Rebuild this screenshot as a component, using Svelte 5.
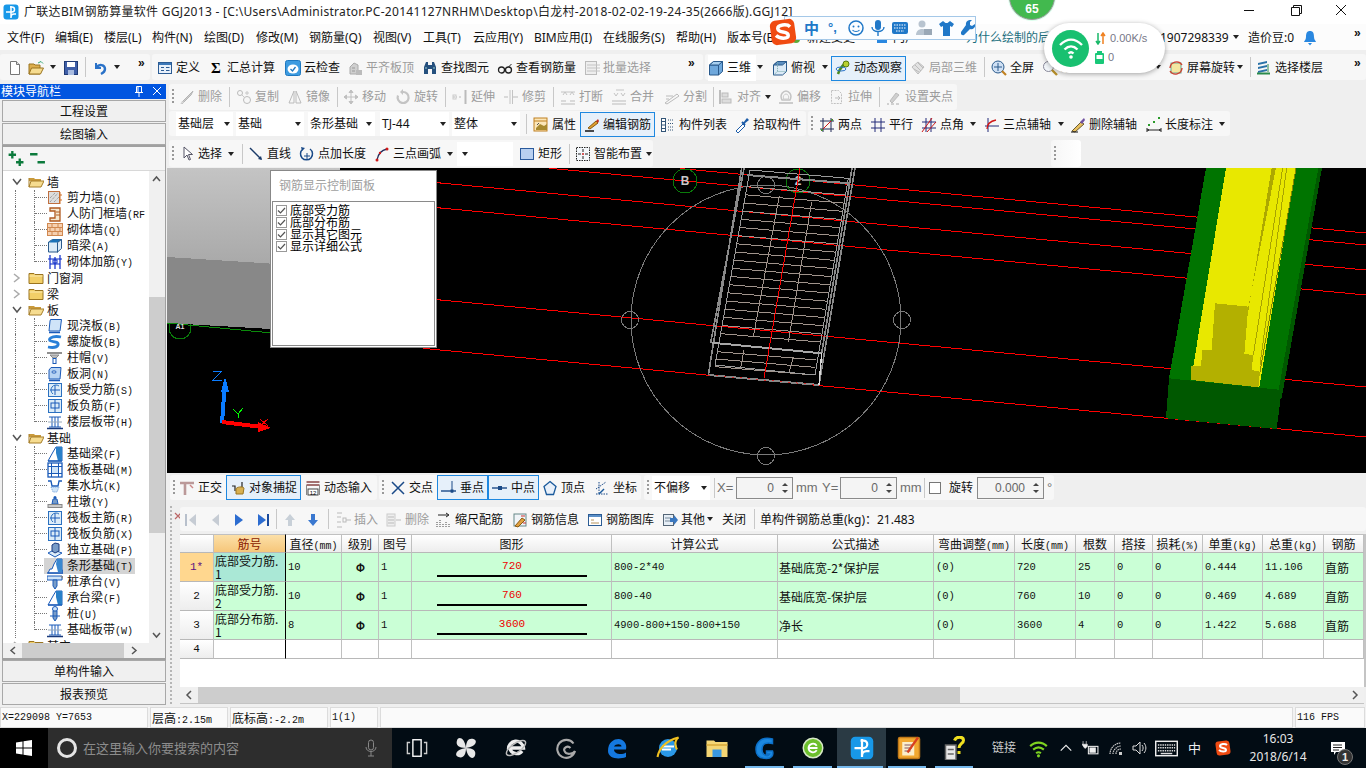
<script>
	// icon bodies, all on a 16x16 viewBox
	const I = {
		new: '<path d="M3.5 1.5h6l3 3v10h-9z" fill="#fff" stroke="#777"/><path d="M9.5 1.5v3h3" fill="#ddd" stroke="#777"/>',
		open: '<path d="M1 4h5l1 1h5v9H1z" fill="#dcae4e" stroke="#9a7420"/><path d="M3.5 8h12l-3 6H1z" fill="#f6dc90" stroke="#9a7420"/><path d="M10 3l3-1.5 2 2" fill="none" stroke="#3a7"/>',
		save: '<rect x="1.5" y="1.5" width="13" height="13" fill="#3f5fa8" stroke="#1f3a75"/><rect x="4" y="2" width="8" height="5" fill="#fff"/><rect x="5" y="10" width="6" height="5" fill="#a9bce0"/>',
		undo: '<path d="M4 3v5h5" fill="none" stroke="#2a72c8" stroke-width="2"/><path d="M4.5 7.5C7 3.5 13 4.5 13 9c0 2.5-2 4-4 5" fill="none" stroke="#2a72c8" stroke-width="2.4"/>',
		def: '<rect x="1.5" y="2.5" width="13" height="11" fill="#e8f0fa" stroke="#2c5c94"/><rect x="2" y="3" width="12" height="2" fill="#3c78b8"/><path d="M4 7.5h3M4 10.5h3M9 7.5h3.5M9 10.5h3.5" stroke="#2c5c94"/>',
		sum: '<text x="8" y="13" font-size="15" font-weight="700" text-anchor="middle" font-family="Liberation Serif">Σ</text>',
		cloud: '<rect x=".5" y=".5" width="15" height="15" rx="2" fill="#3d9be0" stroke="#1e78c0"/><ellipse cx="8" cy="9" rx="5.5" ry="4.5" fill="#fff"/><path d="M5.5 9l2 2 3-4" fill="none" stroke="#1e78c0" stroke-width="1.3"/>',
		level: '<path d="M3 14V7l4-4 4 2v9z" fill="#cfcfcf" stroke="#aaa"/><path d="M9 10h6v5H9z" fill="#bbb"/><path d="M5 8h3M5 11h3" stroke="#999"/>',
		binoc: '<path d="M2 14V7l2-5h2v12zM14 14V7l-2-5h-2v12z" fill="#25507e"/><rect x="6" y="5" width="4" height="4" fill="#25507e"/><path d="M3 8h2M11 8h2" stroke="#9cc"/>',
		glasses: '<circle cx="4.5" cy="10" r="3" fill="none" stroke="#222" stroke-width="1.3"/><circle cx="11.5" cy="10" r="3" fill="none" stroke="#222" stroke-width="1.3"/><path d="M7.5 10h1M11.5 7l3-3" stroke="#222"/>',
		batch: '<rect x="1.5" y="1.5" width="11" height="13" fill="#eee" stroke="#bbb"/><path d="M3 5h13M3 8h13M3 11h13" stroke="#c4c4c4"/>',
		cube: '<path d="M1.5 5l4-3.5h9v10l-4 3.5h-9z" fill="#6fa8dc" stroke="#2a5a8c"/><path d="M1.5 5h9v10M10.5 5l4-3.5" fill="none" stroke="#2a5a8c"/><path d="M1.5 5l4-3.5h9l-4 3.5z" fill="#a8d0f0" stroke="#2a5a8c"/>',
		topview: '<path d="M1.5 5l4-3.5h9v10l-4 3.5h-9z" fill="#dceaf6" stroke="#2a5a8c"/><path d="M5.5 1.5h9l-4 3.5h-9z" fill="#5c8fc0" stroke="#2a5a8c"/><path d="M1.5 15l4-3.5v-10M5.5 11.5h9" fill="none" stroke="#7aa" stroke-dasharray="1 1"/>',
		orbit: '<path d="M3 14C5 8 8 4 13 2" fill="none" stroke="#4a8a20" stroke-width="2.5"/><circle cx="11" cy="4" r="3" fill="#b8d030" stroke="#577a10"/><ellipse cx="6" cy="9" rx="5" ry="2" fill="none" stroke="#2a72c8"/>',
		local3d: '<path d="M2 7l6-5 6 5-6 7z" fill="#e2e2e2" stroke="#bbb"/><path d="M5 5l6 6M8 3l5 5M4 9l5 3" stroke="#bbb"/>',
		zoomfull: '<circle cx="7" cy="7" r="6" fill="#cfe0f4" stroke="#2a5a8c"/><path d="M7 3v8M3 7h8" stroke="#2a5a8c"/><path d="M11 11l4 4" stroke="#c08020" stroke-width="2.2"/>',
		zoom: '<circle cx="6.5" cy="6.5" r="5" fill="#f2f6fa" stroke="#889"/><path d="M10 10l5 5" stroke="#b8902a" stroke-width="2.4"/>',
		rot: '<rect x="3" y="3" width="10" height="10" fill="#f4e6a0" stroke="#6a9"/><path d="M2 8a6.5 6.5 0 0 1 12-3M14 8a6.5 6.5 0 0 1-12 3" fill="none" stroke="#d04030" stroke-width="1.4"/>',
		floors: '<path d="M2 3l9-2v2l-9 2zM2 7l9-2v2l-9 2zM2 11l9-2v2l-9 2z" fill="#2a72a8"/><path d="M1 13.5h13" stroke="#2a8a4a" stroke-width="2"/><path d="M12 4v8" stroke="#2a8a4a"/>',
		del: '<path d="M2 14l9-9 3-3-2 4-9 9z" fill="#ccc" stroke="#b4b4b4"/><path d="M1 15l4-1-2-2z" fill="#ddd"/>',
		copy: '<circle cx="4" cy="4" r="2.5" fill="none" stroke="#bbb"/><circle cx="11" cy="11" r="3.5" fill="none" stroke="#bbb"/><path d="M6 6l3 3M11 2v4M9 4h4" stroke="#c8c8c8"/>',
		mirror: '<path d="M7 2L2 14h5zM9 2l5 12H9z" fill="none" stroke="#bbb"/>',
		move: '<path d="M8 1v14M1 8h14M8 1l-2 2.5h4zM8 15l-2-2.5h4zM1 8l2.5-2v4zM15 8l-2.5-2v4z" stroke="#c0c0c0" fill="#c0c0c0"/>',
		rotate: '<path d="M8 3a5.5 5.5 0 1 1-5 3.5" fill="none" stroke="#c4c4c4" stroke-width="2.2"/><path d="M8 0v6l-3-3z" fill="#c4c4c4"/>',
		extend: '<path d="M1 8h4M7 8h3" stroke="#bbb" stroke-dasharray="2 1"/><path d="M13.5 1v14" stroke="#bbb" stroke-width="2"/><rect x="1" y="6" width="3" height="4" fill="none" stroke="#ccc"/>',
		trim: '<path d="M1 8h4M10 8h5" stroke="#bbb"/><path d="M7 1v14M9.5 1v14" stroke="#c4c4c4"/>',
		brk: '<path d="M1 12h5M10 12h5M1 15h14" stroke="#bbb"/><path d="M3 6l2-3 2 3M10 6l2-3 2 3M1 3h14" stroke="#c4c4c4" fill="none"/>',
		merge: '<path d="M1 12h14M1 15h14" stroke="#bbb"/><path d="M3 4l2 3 2-3M10 4l2 3 2-3M5 1h8" stroke="#c4c4c4" fill="none"/>',
		split: '<path d="M1 14l12-9 2 2-12 8zM2 7h7M2 10h3" fill="none" stroke="#bbb"/>',
		align: '<path d="M2 1v14" stroke="#aaa" stroke-width="1.5"/><rect x="4" y="4" width="6" height="4" fill="#ddd" stroke="#bbb"/><rect x="4" y="10" width="9" height="4" fill="#ddd" stroke="#bbb"/>',
		offset: '<path d="M4 11c-3-6 2-9 4-9s7 3 4 9z" fill="none" stroke="#c4c4c4" stroke-width="1.5"/><path d="M5.5 10c-1-3 1-5 2.5-5s3.500 2 2.5 5z" fill="none" stroke="#ccc"/><path d="M1 14h14" stroke="#ccc" stroke-width="2"/>',
		stretch: '<path d="M2.5 1.5h7l3 3v10h-10z" fill="#f6f6f6" stroke="#c0c0c0" stroke-dasharray="2 1"/><path d="M6 9h5M9 7l2 2-2 2" stroke="#bbb" fill="none"/>',
		handle: '<path d="M4 12l6-8 3 2-7 8z" fill="#d0d0d0" stroke="#bbb"/><path d="M1 15h2M5 15h3M10 15h3" stroke="#aaa"/>',
		prop: '<rect x="1" y="1" width="13" height="13" fill="#fbe6b8" stroke="#c08020"/><path d="M1 4h13" stroke="#c08020"/><path d="M3 11l4-4 4 2 3-2v6H3z" fill="#a88a30"/><path d="M4 8l2-2" stroke="#555"/>',
		edit: '<path d="M1 14h9" stroke="#111" stroke-width="1.5"/><path d="M4 11l8-7 2 2-8 6z" fill="#e0a030" stroke="#8a5a10"/><path d="M12 4l2-2 1 2-1 2z" fill="#c03020"/>',
		list: '<rect x="1.5" y="1.5" width="4" height="13" fill="#fff" stroke="#357"/><path d="M2 4.5h3M2 8h3M2 11.5h3" stroke="#357"/><path d="M8 3h6M8 6.5h6M8 10h6M8 13h6" stroke="#357" stroke-dasharray="1 1"/>',
		pick: '<path d="M2 14l7-7 2 2-7 7z" fill="#fff" stroke="#1c5ca8"/><path d="M9 6l4-5 2 2-5 4z" fill="#1c5ca8"/><path d="M8 5l3 3" stroke="#1c5ca8" stroke-width="2"/>',
		two: '<path d="M4 1v14M12 1v14" stroke="#222a58"/><path d="M1 4h14M1 12h14" stroke="#222a58"/><path d="M2 14L14 2" stroke="#d01818"/><circle cx="13" cy="3" r="1" fill="#2a9a2a"/><circle cx="3" cy="13" r="1" fill="#2a9a2a"/>',
		para: '<path d="M5 1v14M11 1v14M1 5h14M1 11h14" stroke="#222a78"/>',
		angle: '<path d="M5 1v14M10 1v14M1 5h14M1 11h14" stroke="#222a78"/><path d="M1 15L11 1M6 15L15 5" stroke="#d01818"/>',
		arc3: '<path d="M4 1v14M1 9h14" stroke="#222a78"/><path d="M3 12c0-5 4-8 9-9" fill="none" stroke="#d01818" stroke-width="1.3"/>',
		delaxis: '<path d="M2 14l9-9 3 2-9 8z" fill="#e8c060" stroke="#6a5a30"/><path d="M10 5l4-4 1 2-3 4z" fill="#7050a0"/><path d="M1 15h7" stroke="#111"/>',
		dim: '<path d="M1 11v4M15 11v4M1 13h14" stroke="#222"/><path d="M1 13l2-1v2zM15 13l-2-1v2z" fill="#222"/><rect x="2" y="7" width="2" height="2" fill="#2a9a2a"/><rect x="7" y="4" width="2" height="2" fill="#2a9a2a"/><rect x="12" y="0" width="2" height="2" fill="#2a9a2a"/>',
		sel: '<path d="M5 1v11l3-3 2 5 1.5-.5-2-5h4z" fill="#fff" stroke="#556"/>',
		line: '<path d="M2 2l11 11" stroke="#1a3a68" stroke-width="1.5"/><path d="M14 14l-4-1 3-3z" fill="#1a3a68"/>',
		ptlen: '<path d="M4 3a6 6 0 1 0 7 0" fill="none" stroke="#1a4a88" stroke-width="1.5"/><path d="M8 7v6M5 10h6" stroke="#1a4a88"/><path d="M2 1l4 1-3 3z" fill="#1a4a88"/>',
		arc: '<path d="M3 14C4 8 8 4 13 3" fill="none" stroke="#222a58" stroke-width="1.3"/><circle cx="3" cy="14" r="1.5" fill="#d01818"/><circle cx="13" cy="3" r="1.5" fill="#d01818"/><circle cx="6" cy="7" r="1.2" fill="#d01818"/>',
		rect: '<rect x="1.5" y="2.5" width="13" height="11" fill="#b8d0f0" stroke="#2a5a9c"/>',
		smart: '<rect x="1.5" y="1.5" width="13" height="13" fill="#f4f8fc" stroke="#222" stroke-dasharray="1.5 1"/><path d="M8 3v3M8 10v3M3 8h3M10 8h3" stroke="#222"/><circle cx="8" cy="8" r="1" fill="#c22"/>',
		ortho: '<path d="M1 3h14M6 3v12" stroke="#b99" stroke-width="2.6"/><path d="M11 5l3 3" stroke="#c88" stroke-width="1.4"/>',
		snap: '<path d="M2 6h3v5M12 2v7" stroke="#222" stroke-width="1.2" fill="none"/><path d="M6 9c0-2 7-3 8-1l-1 6H6z" fill="#d8b050" stroke="#9a7420"/>',
		dyn: '<path d="M1.5 2h13M1.5 5h13" stroke="#844" stroke-width="1.3"/><path d="M1.5 5v10M14.5 5v10" stroke="#888"/><rect x="3" y="9" width="10" height="6" fill="#fff" stroke="#444"/><text x="8" y="14.5" font-size="6" text-anchor="middle" font-family="Liberation Sans">12</text>',
		cross: '<path d="M2 2l12 12M14 2L2 14" stroke="#1a4a88" stroke-width="1.5"/>',
		perp: '<path d="M0 11h15" stroke="#1a4a88" stroke-width="1.4"/><path d="M11 1v12" stroke="#1a4a88"/><rect x="9.5" y="9.5" width="3" height="3" fill="#1a4a88"/>',
		mid: '<path d="M0 8h15" stroke="#1a4a88" stroke-width="1.4"/><rect x="6" y="6" width="4" height="4" fill="#1a4a88"/>',
		apex: '<path d="M8 1.5l6 5-2.5 8h-7L2 6.5z" fill="#e8f0fa" stroke="#1a5a9c" stroke-width="1.3"/>',
		coord: '<path d="M2 14h12M5 2v12M2 9l10-7" stroke="#1a4a88" stroke-dasharray="1.5 1"/><path d="M5 14l5-5" stroke="#1a5a9c" stroke-width="1.4"/>',
		first: '<path d="M3 2v12" stroke="#b8c0cc" stroke-width="2"/><path d="M13 2v12L6 8z" fill="#c6ccd4"/>',
		prev: '<path d="M12 2v12L5 8z" fill="#c6ccd4"/>',
		next: '<path d="M4 2v12l8-6z" fill="#2c6cd0"/>',
		last: '<path d="M2 2v12l8-6z" fill="#2c6cd0"/><path d="M12 2v12" stroke="#1a4a9c" stroke-width="2"/>',
		up: '<path d="M8 2l5 6h-3v6H6V8H3z" fill="#c8d0d8"/>',
		down: '<path d="M8 14l5-6h-3V2H6v6H3z" fill="#3a78d0"/>',
		ins: '<path d="M2 1h5M2 5h4M2 15h5M2 10h4" stroke="#bbb"/><rect x="8" y="6" width="3" height="4" fill="none" stroke="#bbb"/><path d="M11 8h5" stroke="#bbb"/>',
		rm: '<rect x="1" y="2" width="8" height="12" fill="#eee" stroke="#ccc"/><path d="M2 5h6M2 8h6M2 11h6M10 8h5" stroke="#bbb"/>',
		scale: '<path d="M1 15v-5M4 15V8M7 15v-4M10 15v-6M13 15v-3" stroke="#444" stroke-dasharray="1 1"/><path d="M2 3h10M10 1l3 2-3 2" stroke="#222" fill="none"/>',
		info: '<rect x="2" y="2" width="12" height="12" fill="#f0f4f8" stroke="#688"/><path d="M3 14l7-8 3 2-7 7z" fill="#e0a040" stroke="#8a5a10"/><path d="M9 4h4M11 11h3" stroke="#c33"/>',
		lib: '<rect x="1.5" y="2.5" width="13" height="11" fill="#fff" stroke="#2c5c94"/><rect x="2" y="3" width="12" height="2" fill="#5c90c8"/><path d="M4 8h3M4 11h8" stroke="#b8945c"/>',
		other: '<rect x="1.5" y="2.5" width="10" height="11" fill="#e6eef6" stroke="#567"/><path d="M3 6h6M3 9h6" stroke="#789"/><path d="M8 6h4V3l4 5-4 5v-3H8z" fill="#3a78c0"/>',
		bell: '<path d="M8 1c-3 0-4 2-4 6 0 3-2 4-2 5h12c0-1-2-2-2-5 0-4-1-6-4-6z" fill="#2a88e0"/><path d="M6 13h4l-2 2.5z" fill="#2a88e0"/>',
		doc: '<circle cx="8" cy="9" r="4" fill="#5cab3a"/><path d="M4 5l4-4 4 4z" fill="#e8c060"/>',
		portal: '<rect x="3" y="3" width="10" height="10" fill="#2a88e0"/>',
		// tree
		folderOpen: '<path d="M1 4h5l1 1h6v2H1z" fill="#c99a3c"/><path d="M1 13V4M3 7h13l-3 6H1z" fill="#f6dc90" stroke="#a67f2a"/>',
		folder: '<path d="M1 3.5h5l1 1h8v9H1z" fill="#f2cf68" stroke="#9a7420"/><path d="M1.5 6h13" stroke="#fbe9ae"/>',
		shear: '<rect x="1.5" y="1.5" width="11" height="12" fill="#ddd" stroke="#c07040"/><path d="M3 12l8-9M3 8l5-5M7 12l5-5" stroke="#888" stroke-dasharray="1 1"/><path d="M13 2v12M12 5h3M12 10h3" stroke="#d07028"/>',
		door: '<path d="M3 2h10v13H3v-3h5V5H3z" fill="#f5e8d0" stroke="#b05a20" stroke-width="1.3"/><path d="M9 6h4M9 9h4" stroke="#b05a20"/>',
		brick: '<rect x=".5" y="1.5" width="15" height="12" fill="#f6d0b0" stroke="#d08850"/><path d="M1 5.5h14M1 9.5h14M5 2v3M11 2v3M8 6v3M3 6v3M13 6v3M5 10v3M11 10v3" stroke="#d08850"/>',
		hidden: '<path d="M1.5 4l4-2.5h9v9l-4 3.5h-9z" fill="#dcecf8" stroke="#2a5a8c"/><path d="M5.5 1.5h9l-4 3h-9z" fill="#1a72b8"/><path d="M10.5 4.5v10M14.5 1.5l-4 3" stroke="#2a5a8c"/>',
		wallbar: '<path d="M1 5h14M3 1v14M13 1v14M3 10h10M8 3v12" stroke="#0a2ac8" stroke-width="1.2" fill="none"/><rect x="6" y="6" width="4" height="3" fill="none" stroke="#0a2ac8"/>',
		plate: '<path d="M3 3l.5-1.5h11L13 13H2z" fill="#cfe4f8" stroke="#1a5ab8"/><path d="M2 14.5h11" stroke="#1a5ab8" stroke-width="1.5"/>',
		spiral: '<path d="M14 3C4 1 0 6 4 7c4 1 8 1 7 4-1 2-5 3-10 2" fill="none" stroke="#2a80d8" stroke-width="2.8"/>',
		cap: '<path d="M0 2h15v2H0z" fill="#909090"/><path d="M3 5h9l-3 3H6z" fill="#c0c0c0" stroke="#888"/><rect x="6" y="8.5" width="3" height="5" fill="#fff" stroke="#1a5ab8"/>',
		hole: '<path d="M2 13V4l2-2.5h10L13 13z" fill="#b8d4f4" stroke="#1a5ab8"/><rect x="5" y="5" width="4" height="2" rx="1" fill="#fff" stroke="#1a5ab8"/><path d="M2 14.5h11" stroke="#1a5ab8" stroke-width="1.5"/>',
		rbar: '<rect x="1.5" y="1.5" width="13" height="13" fill="#dcecf8" stroke="#2a70c0"/><path d="M8 3v10M3 8h10" stroke="#1a5ab8"/><path d="M6 12a5 5 0 0 1 6-8" stroke="#2a70c0" fill="none"/>',
		nbar: '<rect x="1.5" y="1.5" width="13" height="13" fill="#dcecf8" stroke="#2a70c0"/><rect x="4" y="5" width="8" height="5" fill="none" stroke="#1a5ab8"/><path d="M8 2v12" stroke="#1a5ab8"/>',
		band: '<path d="M2 3h12M2 13h12M5 3v10M11 3v10M8 3v10" stroke="#1a5ab8"/><path d="M0 14.5h16" stroke="#1a3a7c" stroke-width="1.5"/><path d="M1 8h14" stroke="#9ab"/>',
		fbeam: '<path d="M1 15l5-9 3-5h6v14z" fill="#fff" stroke="#1a5ab8"/><path d="M9 1h6v14h-4l-2-8z" fill="#2a80c8"/><path d="M1 15h14" stroke="#1a5ab8" stroke-width="1.3"/>',
		raft: '<rect x="1" y="1" width="14" height="14" fill="#fff" stroke="#1a5ab8" stroke-width="1.3"/><rect x="4.5" y="4.5" width="7" height="7" fill="#cfe4f8" stroke="#1a5ab8"/><path d="M1 4.5h14M1 11.5h14M4.5 1v14M11.5 1v14" stroke="#1a5ab8"/>',
		pit: '<path d="M1 3h3l1 5h6l1-5h3" fill="none" stroke="#1a5ab8" stroke-width="1.3"/><path d="M4 9l2 5h4l2-5z" fill="#cfe4f8" stroke="#6a9ad8" stroke-dasharray="1 1"/>',
		pier: '<path d="M6 5h4l1 5H5z" fill="#789cc8" stroke="#1a5ab8"/><circle cx="8" cy="3.5" r="1.5" fill="#1a5ab8"/><rect x="1" y="10.5" width="14" height="3" fill="#ccc" stroke="#888"/>',
		iso: '<path d="M1 11l6-3 8 3-7 4z" fill="#dcecf8" stroke="#1a5ab8"/><path d="M5 9V3l3-2 4 1v7l-4 2z" fill="#789cc8" stroke="#1a3a7c"/>',
		strip: '<path d="M1 15l2-4h2l2-5 3-5h5v10l1 4z" fill="#fff" stroke="#1a5ab8"/><path d="M10 1h5v13h-4l-2-8z" fill="#3a88d0"/><path d="M0 15h16" stroke="#1a5ab8" stroke-width="1.3"/>',
		pilecap: '<path d="M0 2h15v4H0z" fill="#cfe4f8" stroke="#1a5ab8"/><path d="M6 6h4v6l-2 3-2-3z" fill="#789cc8" stroke="#1a5ab8"/><path d="M13 2h3v3z" fill="#888"/>',
		pile: '<circle cx="8" cy="3" r="2.5" fill="#cfe4f8" stroke="#1a5ab8"/><path d="M6 5h4v7l-2 3-2-3zM3 10h10" fill="#789cc8" stroke="#1a5ab8"/>',
		plus: '<path d="M5 1v7M1.5 4.5h7M12 8v7M8.5 11.5h7" stroke="#0c7a3c" stroke-width="2.2"/>',
		minus: '<path d="M1 4h7M8 11.5h7" stroke="#0c7a3c" stroke-width="2.2"/>',
		// taskbar
		taskview: '<rect x="5" y="2" width="6" height="12" fill="none" stroke="#fff"/><path d="M3 4H1v8h2M13 4h2v8h-2" fill="none" stroke="#ccc"/>',
		pin: '<path d="M8 8C3 8 1 6 2 3s5-2 6 5zM8 8c0-5 2-7 5-6s2 5-5 6zM8 8c5 0 7 2 6 5s-5 2-6-5zM8 8c0 5-2 7-5 6s-2-5 5-6z" fill="#e8e8e8"/>',
		ie: '<path d="M3 9a5 5 0 0 1 10-1H4c.5 4 6 5 8 2" fill="none" stroke="#eee" stroke-width="2.2"/><ellipse cx="8" cy="8" rx="7.5" ry="3" fill="none" stroke="#bbb" transform="rotate(-35 8 8)"/>',
		spin: '<path d="M13 5a6 6 0 1 0 1 5c-1 2-6 3-7 0-1-2 2-4 4-2" fill="none" stroke="#aaa" stroke-width="1.4"/>',
		edge: '<path d="M2 10C2 4 6 2 9 2s6 3 5 7H6c0 3 5 4 8 2v3c-5 2-12 1-12-4z" fill="#1478e0"/><path d="M6 7h5c0-2-4-2-5 0z" fill="#010b12"/>',
		ieblue: '<circle cx="8" cy="8" r="6" fill="#2a98e8"/><path d="M4 7h8M4 9h6" stroke="#fff" stroke-width="1.4"/><path d="M1 14c1-6 6-11 14-13-4 3-1 8-1 8" fill="none" stroke="#f0c020" stroke-width="1.4"/>',
		explorer: '<path d="M1 3h5l1 1h8v10H1z" fill="#f4d674"/><rect x="5" y="9" width="6" height="5" fill="#3a98e0"/><path d="M1 6h14" stroke="#d8a838"/>',
		gblue: '<path d="M13 2C6 0 2 4 2 9s4 6 7 6 5-2 4-5H9v2h2c-1 2-5 1-5-3s3-5 7-4z" fill="#1c88e0" stroke="#0c70c8"/>',
		ge: '<circle cx="8" cy="8" r="6.5" fill="#6cbf2c" stroke="#d8e8c8"/><path d="M5 8h6M5 8a3 3 0 0 1 5.5-1.5M5 8a3 3 0 0 0 5.5 1.5" fill="none" stroke="#fff" stroke-width="1.2"/>',
		gld: '<rect x=".5" y=".5" width="15" height="15" rx="3" fill="#1898e8"/><path d="M8 2v12M3 8h6a2.5 2.5 0 0 0 0-5H7M8 13a3 3 0 0 1 3-3h2" fill="none" stroke="#fff" stroke-width="1.5"/>',
		note: '<rect x="1" y="1" width="14" height="14" rx="1" fill="#f2a830" stroke="#c07818"/><rect x="3.5" y="4" width="8" height="9" fill="#fbeecb"/><path d="M5 6h5M5 8h5M5 10h4" stroke="#a88"/><path d="M7 11l7-10" stroke="#d84020" stroke-width="1.5"/>',
		help: '<rect x="1" y="6" width="7" height="10" fill="#e8e8e8" stroke="#666"/><path d="M2.5 9h4M2.5 12h4" stroke="#666"/><path d="M7 3c1-3 6-3 6 0 0 2-3 2-3 5M10 10v2" fill="none" stroke="#f0e020" stroke-width="2"/>',
		wifi: '<path d="M1 6c4-4 10-4 14 0M3.5 9c3-2.5 6-2.5 9 0M6 12c1.2-1 2.8-1 4 0" fill="none" stroke="#7ed321" stroke-width="1.8"/><circle cx="8" cy="14.2" r="1.3" fill="#7ed321"/>',
		caret: '<path d="M2 11l6-6 6 6" fill="none" stroke="#eee" stroke-width="1.3"/>',
		plug: '<rect x="6" y="6" width="9" height="7" fill="none" stroke="#eee"/><rect x="7" y="7" width="6" height="5" fill="#eee"/><path d="M1 1v3M4 1v3M0 4h5v2l-2 2-1-1z" fill="#eee" stroke="#eee" stroke-width=".6"/>',
		sig: '<path d="M2 14c0-6 5-11 11-11M5 14c0-4 4-8 8-8M8 14c0-3 2-5 5-5" fill="none" stroke="#ccc" stroke-dasharray="1.5 .6" stroke-width="1.2"/><path d="M11 12h3v3h-3z" fill="#ccc"/>',
		vol: '<path d="M2 6h3l4-4v12l-4-4H2z" fill="none" stroke="#ddd"/><path d="M11 5c1.5 2 1.5 4 0 6M13 3c2.5 3 2.5 7 0 10" fill="none" stroke="#ddd"/>',
		kbd: '<rect x=".5" y="3" width="15" height="10" fill="none" stroke="#eee"/><path d="M2 5.5h12M2 7.5h12M2 9.5h12" stroke="#ddd" stroke-dasharray="1 .6"/><path d="M4 11.5h8" stroke="#ddd"/>',
		msg: '<path d="M1 1h14v10H6l-2 3v-3H1z" fill="#fff"/><path d="M3 4h9M3 6.5h9M3 9h6" stroke="#222"/>',
		sogou: '<rect x="1" y="1" width="14" height="14" rx="3" fill="#f04b12" transform="rotate(-8 8 8)"/><path d="M12 5c-2-2-7-1-7 1 0 3 6 1 6 4 0 2-5 2-7 0" fill="none" stroke="#fff" stroke-width="2"/>'
	};

	const it = (x, ic, t, extra = {}) => ({ x, ic, t, ...extra });
	const arr = (x) => ({ x, arrow: true });
	const sep = (x) => ({ x, sep: true });
	const grip = (x) => ({ x, grip: true });
	const more = (x) => ({ x, more: true });
	const off = { off: true };

	// widths come from the x of the next item in the group
	function group(from, to, items, cls = '') {
		return { from, to, cls, items: items.map((a, i) => ({ ...a, w: (items[i + 1]?.x ?? to) - a.x })) };
	}

	const menuRow = [group(0, 1366, [
		it(7, null, '文件(F)'), it(55, null, '编辑(E)'), it(104, null, '楼层(L)'), it(152, null, '构件(N)'),
		it(204, null, '绘图(D)'), it(256, null, '修改(M)'), it(309, null, '钢筋量(Q)'), it(373, null, '视图(V)'),
		it(423, null, '工具(T)'), it(473, null, '云应用(Y)'), it(534, null, 'BIM应用(I)'), it(603, null, '在线服务(S)'),
		it(676, null, '帮助(H)'), it(727, null, '版本号(B)'), it(788, 'doc', '新建变更'), it(874, 'portal', '门户'),
		it(966, null, '为什么绘制的后', { teal: true }), it(1160, null, '1907298339'), arr(1230), it(1248, null, '造价豆:0'),
		it(1302, 'bell', ''), more(1354)
	], 'plain')];

	const row1 = [
		group(0, 150, [it(7, 'new', ''), it(28, 'open', ''), arr(47), it(63, 'save', ''), sep(82), it(92, 'undo', ''), arr(111), more(138)]),
		group(152, 703, [
			it(157, 'def', '定义'), it(208, 'sum', '汇总计算'), it(285, 'cloud', '云检查'), it(347, 'level', '平齐板顶', off),
			it(422, 'binoc', '查找图元'), it(497, 'glasses', '查看钢筋量'), it(584, 'batch', '批量选择', off), more(688)
		]),
		group(705, 1366, [
			it(708, 'cube', '三维', { white: true }), arr(754), it(772, 'topview', '俯视'), arr(819),
			it(831, 'orbit', '动态观察', { on: true, bw: 75 }), it(910, 'local3d', '局部三维', off), sep(981),
			it(991, 'zoomfull', '全屏'), it(1042, 'zoom', '缩放'), arr(1152), it(1168, 'rot', '屏幕旋转'), arr(1234),
			sep(1247), it(1256, 'floors', '选择楼层'), more(1354)
		])
	];

	const row2 = [group(169, 957, [
		grip(170), it(179, 'del', '删除', off), sep(226), it(236, 'copy', '复制', off), it(287, 'mirror', '镜像', off), sep(334),
		it(343, 'move', '移动', off), it(395, 'rotate', '旋转', off), sep(442), it(452, 'extend', '延伸', off), it(503, 'trim', '修剪', off),
		sep(550), it(560, 'brk', '打断', off), it(611, 'merge', '合并', off), it(664, 'split', '分割', off), sep(710),
		it(718, 'align', '对齐', off), arr(762), it(778, 'offset', '偏移', off), it(829, 'stretch', '拉伸', off), sep(876), it(886, 'handle', '设置夹点', off)
	])];

	const row3 = [
		group(169, 806, [
			{ x: 176, combo: '基础层', bw: 57 }, { x: 236, combo: '基础', bw: 68 }, { x: 308, combo: '条形基础', bw: 67 },
			{ x: 380, combo: 'TJ-44', bw: 69 }, { x: 452, combo: '整体', bw: 68 }, sep(523), it(533, 'prop', '属性'),
			it(580, 'edit', '编辑钢筋', { on: true, bw: 75 }), it(660, 'list', '构件列表'), it(734, 'pick', '拾取构件')
		]),
		group(808, 1230, [
			grip(809), it(819, 'two', '两点'), it(870, 'para', '平行'), it(921, 'angle', '点角'), arr(967), it(984, 'arc3', '三点辅轴'),
			arr(1055), it(1070, 'delaxis', '删除辅轴'), it(1146, 'dim', '长度标注'), arr(1216)
		])
	];

	const row4 = [
		group(169, 653, [
			grip(170), it(179, 'sel', '选择'), arr(225), sep(239), it(248, 'line', '直线'), it(299, 'ptlen', '点加长度'), it(374, 'arc', '三点画弧'),
			arr(444), { x: 457, combo: '', bw: 56 }, it(519, 'rect', '矩形'), sep(566), it(575, 'smart', '智能布置'), arr(643)
		]),
		group(1051, 1081, [grip(1052)], 'stub')
	];

	const snapRow = [
		group(170, 377, [grip(171), it(179, 'ortho', '正交'), it(226, 'snap', '对象捕捉', { on: true, bw: 75 }), it(305, 'dyn', '动态输入')]),
		group(379, 641, [
			grip(380), it(390, 'cross', '交点'), it(437, 'perp', '垂点', { on: true, bw: 51 }), it(488, 'mid', '中点', { on: true, bw: 51 }),
			it(542, 'apex', '顶点'), it(594, 'coord', '坐标')
		]),
		group(644, 1054, [
			grip(645), { x: 652, combo: '不偏移', bw: 58 }, sep(711), it(717, null, 'X=', { dim: true }), { x: 736, spin: '0', bw: 57 },
			it(796, null, 'mm', { dim: true }), it(822, null, 'Y=', { dim: true }), { x: 840, spin: '0', bw: 57 }, it(900, null, 'mm', { dim: true }),
			sep(921), { x: 929, check: true }, it(949, null, '旋转'), { x: 977, spin: '0.000', bw: 67 }, it(1047, null, '°', { dim: true })
		])
	];

	const editRow = [group(180, 1366, [
		it(183, 'first', ''), it(207, 'prev', ''), it(231, 'next', ''), it(256, 'last', ''), sep(273), it(282, 'up', ''), it(305, 'down', ''),
		sep(325), it(335, 'ins', '插入', off), it(386, 'rm', '删除', off), it(436, 'scale', '缩尺配筋'), it(512, 'info', '钢筋信息'),
		it(587, 'lib', '钢筋图库'), it(662, 'other', '其他'), arr(704), it(722, null, '关闭'), sep(751), it(760, null, '单构件钢筋总重(kg)：21.483')
	])];

	const tree = [
		{ n: '墙', open: true, kids: [['剪力墙', '(Q)', 'shear'], ['人防门框墙', '(RF', 'door'], ['砌体墙', '(Q)', 'brick'], ['暗梁', '(A)', 'hidden'], ['砌体加筋', '(Y)', 'wallbar']] },
		{ n: '门窗洞' },
		{ n: '梁' },
		{ n: '板', open: true, kids: [['现浇板', '(B)', 'plate'], ['螺旋板', '(B)', 'spiral'], ['柱帽', '(V)', 'cap'], ['板洞', '(N)', 'hole'], ['板受力筋', '(S)', 'rbar'], ['板负筋', '(F)', 'nbar'], ['楼层板带', '(H)', 'band']] },
		{ n: '基础', open: true, kids: [['基础梁', '(F)', 'fbeam'], ['筏板基础', '(M)', 'raft'], ['集水坑', '(K)', 'pit'], ['柱墩', '(Y)', 'pier'], ['筏板主筋', '(R)', 'rbar'], ['筏板负筋', '(X)', 'nbar'], ['独立基础', '(P)', 'iso'], ['条形基础', '(T)', 'strip'], ['桩承台', '(V)', 'pilecap'], ['承台梁', '(F)', 'fbeam'], ['桩', '(U)', 'pile'], ['基础板带', '(W)', 'band']] },
		{ n: '其它' }
	];

	const cols = [34, 72, 56, 37, 33, 200, 166, 156, 81, 61, 39, 38, 50, 60, 61, 40];
	const heads = ['', '筋号', '直径|(mm)', '级别', '图号', '图形', '计算公式', '公式描述', '弯曲调整|(mm)', '长度|(mm)', '根数', '搭接', '损耗|(%)', '单重|(kg)', '总重|(kg)', '钢筋'];
	const rows = [
		{ h: '1*', name: '底部受力筋.', sub: '1', d: '10', n: '720', f: '800-2*40', desc: '基础底宽-2*保护层', len: '720', cnt: '25', u: '0.444', t: '11.106' },
		{ h: '2', name: '底部受力筋.', sub: '2', d: '10', n: '760', f: '800-40', desc: '基础底宽-保护层', len: '760', cnt: '10', u: '0.469', t: '4.689' },
		{ h: '3', name: '底部分布筋.', sub: '1', d: '8', n: '3600', f: '4900-800+150-800+150', desc: '净长', len: '3600', cnt: '4', u: '1.422', t: '5.688' }
	];

	// viewport scene: long red axis lines, y given at x=1100
	const axes = [208, 220, 245, 270, 362, 412];
	const starts = [680, 549, 437, 437, 437, 423];
	const ribs = [];
	for (let y = 65; y <= 510; y += 24.5) {
		const x = 390 - (y - 15) * 0.1795;
		ribs.push([x, y, x + 297, y + 25]);
	}
	for (const y of [560, 582, 605]) {
		const x = 390 - (y - 15) * 0.1795;
		ribs.push([x, y, x + 297, y + 25]);
	}
	const taskApps = [
		['pin', 49], ['ie', 51], ['spin', 50], ['edge', 51], ['ieblue', 51], ['explorer', 48], ['gblue', 48], ['ge', 48], ['gld', 49, true], ['note', 46], ['help', 47]
	];
	const tray = [['wifi', 1028, 19], ['caret', 1058, 14], ['plug', 1081, 17], ['sig', 1107, 16], ['vol', 1130, 16], ['kbd', 1154, 23]];
	const lit = [[745, 39], [793, 39], [837, 46], [888, 38], [935, 38]];
</script>

{#snippet icon(name, size = 16)}
	<svg class="ico" width={size} height={size} viewBox="0 0 16 16">{@html I[name]}</svg>
{/snippet}

{#snippet toolRow(groups, left)}
	{#each groups as g, gi}
		<div class="grp {g.cls}" style="margin-left:{g.from - (gi ? groups[gi - 1].to : left)}px;width:{g.to - g.from}px;padding-left:{g.items[0].x - g.from}px">
			{#each g.items as a}
				<div class="cell" style="width:{a.w}px">
					{#if a.sep}
						<i class="sep"></i>
					{:else if a.grip}
						<i class="grip"></i>
					{:else if a.arrow}
						<i class="arrow"></i>
					{:else if a.more}
						<span class="more">»</span>
					{:else if a.combo !== undefined}
						<span class="combo" style="width:{a.bw}px">{a.combo}<i class="arrow"></i></span>
					{:else if a.spin}
						<span class="spin" style="width:{a.bw}px">{a.spin}<b class="updown"><i></i><i></i></b></span>
					{:else if a.check}
						<i class="box"></i>
					{:else}
						<span class="it" class:off={a.off} class:on={a.on} class:white={a.white} class:teal={a.teal} class:dim={a.dim} style={a.bw ? `width:${a.bw}px` : ''}>
							{#if a.ic}{@render icon(a.ic)}{/if}
							{#if a.t}<span>{a.t}</span>{/if}
						</span>
					{/if}
				</div>
			{/each}
		</div>
	{/each}
{/snippet}

<div class="app">
	<header class="title">
		<svg class="logo" width="16" height="16" viewBox="0 0 16 16">{@html I.gld}</svg>
		<span>广联达BIM钢筋算量软件 GGJ2013 - [C:\Users\Administrator.PC-20141127NRHM\Desktop\白龙村-2018-02-02-19-24-35(2666版).GGJ12]</span>
		<div class="winbtns">
			<svg width="46" height="20" viewBox="0 0 46 20"><path d="M18 10.5h10" stroke="#111" /></svg>
			<svg width="46" height="20" viewBox="0 0 46 20"><path d="M19.5 7.5h8v8h-8zM21.5 7.5v-2h8v8h-2" fill="none" stroke="#111" /></svg>
			<svg width="46" height="20" viewBox="0 0 46 20"><path d="M18 5l10 10M28 5L18 15" stroke="#111" /></svg>
		</div>
	</header>

	<div class="bar menu nudge">{@render toolRow(menuRow, 0)}</div>
	<div class="bar r1 nudge">{@render toolRow(row1, 0)}</div>

	<div class="main">
		<aside class="nav">
			<div class="navhead">
				<span>模块导航栏</span>
				<svg width="18" height="15" viewBox="0 0 18 15"><path d="M6.5 2.5h5v6h-5zM5 8.500h8M9 9v4M8 3v5" fill="none" stroke="#fff" /></svg>
				<svg width="18" height="15" viewBox="0 0 18 15"><path d="M5 3l8 8M13 3l-8 8" stroke="#fff" /></svg>
			</div>
			<button class="navbtn">工程设置</button>
			<button class="navbtn gap">绘图输入</button>
			<div class="frame">
				<div class="expand">{@render icon('plus', 17)}{@render icon('minus', 17)}</div>
				<div class="treewrap">
					<div class="list">
						{#each tree as t}
							<div class="node">
								{#if t.open}
									<svg class="chev" width="10" height="8" viewBox="0 0 10 8"><path d="M1 1l4 5 4-5" fill="none" stroke="#555" stroke-width="1.5" /></svg>
								{:else}
									<svg class="chev" width="10" height="10" viewBox="0 0 10 10"><path d="M2 1l5 4-5 4" fill="none" stroke="#aaa" stroke-width="1.5" /></svg>
								{/if}
								{@render icon(t.open ? 'folderOpen' : 'folder')}
								<span class="nm">{t.n}</span>
							</div>
							{#each t.kids ?? [] as k, i}
								<div class="kid">
									<i class="stem"></i>
									<i class="conn" class:last={i === t.kids.length - 1}></i>
									<span class="ent" class:sel={k[0] === '条形基础'}>
										{@render icon(k[2])}
										<span class="lbl">{k[0]}<span class="key">{k[1]}</span></span>
									</span>
								</div>
							{/each}
						{/each}
					</div>
					<div class="vscroll">
						<svg width="15" height="16" viewBox="0 0 15 16"><path d="M4 10l3.5-4 3.5 4" fill="none" stroke="#555" stroke-width="1.5" /></svg>
						<div class="vtrack"><div class="vthumb"></div></div>
						<svg width="15" height="16" viewBox="0 0 15 16"><path d="M4 6l3.5 4 3.5-4" fill="none" stroke="#555" stroke-width="1.5" /></svg>
					</div>
				</div>
				<div class="hscroll">
					<svg width="19" height="15" viewBox="0 0 19 15"><path d="M12 4L8 7.5 12 11" fill="none" stroke="#555" stroke-width="1.5" /></svg>
					<div class="hthumb"></div>
					<svg class="end" width="19" height="15" viewBox="0 0 19 15"><path d="M7 4l4 3.5L7 11" fill="none" stroke="#555" stroke-width="1.5" /></svg>
				</div>
			</div>
			<button class="navbtn">单构件输入</button>
			<button class="navbtn gap">报表预览</button>
		</aside>

		<section class="work">
			<div class="bar r2">{@render toolRow(row2, 167)}</div>
			<div class="bar r3 nudge">{@render toolRow(row3, 167)}</div>
			<div class="bar r4">{@render toolRow(row4, 167)}</div>

			<div class="view">
				<svg class="scene" width="1199" height="305" viewBox="167 168 1199 305" shape-rendering="crispEdges">
					<rect x="167" y="168" width="1199" height="305" fill="#000" />
					{#each axes as y, i}
						<line x1={starts[i]} y1={y - (1100 - starts[i]) * 0.094} x2="1366" y2={y + 266 * 0.094} stroke="#f00" />
					{/each}

					<!-- grid circle and small end markers -->
					<circle cx="766" cy="320" r="135" fill="none" stroke="#7a7a7a" />
					<circle cx="630" cy="320" r="8.5" fill="none" stroke="#7a7a7a" />
					<circle cx="902" cy="320" r="8.5" fill="none" stroke="#7a7a7a" />
					<circle cx="766" cy="456" r="8.5" fill="none" stroke="#7a7a7a" />
					<circle cx="766" cy="185" r="8.5" fill="none" stroke="#7a7a7a" />
					<circle cx="685" cy="181" r="12" fill="none" stroke="#0a7a0a" />
					<circle cx="798" cy="181" r="12" fill="none" stroke="#0a7a0a" />
					<text x="685" y="185" class="axis" fill="#c8c8c8">B</text>
					<text x="798" y="185" class="axis" fill="#c8c8c8">2</text>

					<!-- stair truss, drawn in the 3x zoom coordinates it was measured in -->
					<g transform="translate(620 165) scale(.33333)" fill="none">
						{#each ribs as r}
							<line x1={r[0]} y1={r[1]} x2={r[2]} y2={r[3]} stroke="#a0948c" stroke-width="3" />
						{/each}
						<path d="M478 92L400 515M575 110L505 530M372 555L362 610M520 575L508 620" stroke="#a0948c" stroke-width="3" />
						<path d="M390 15L285 600L585 630L685 40L390 15" stroke="#9a9a9a" stroke-width="3" />
						<path d="M365 10L265 630M372 10L272 533M705 10L597 660M696 10L605 565" stroke="#8a8a8a" stroke-width="5" />
						<path d="M380 30L690 55" stroke="#8a8a8a" stroke-width="6" />
						<path d="M275 533L605 565" stroke="#a8a8a8" stroke-width="6" />
						<path d="M265 630L597 660" stroke="#888" stroke-width="6" />
						<path d="M597 660L605 565" stroke="#d8d8d8" stroke-width="4" />
						<path d="M265 630L597 660" stroke="#f00" stroke-width="2" stroke-dasharray="6 18" />
						<path d="M540 10L432 640" stroke="#f00" stroke-width="3" />
					</g>

					<!-- strip footing on the right -->
					<g transform="translate(1100 165) scale(.33333)">
						<path d="M318 9H666L545 675L207 640Z" fill="#007400" />
						<path d="M655 9H666L545 700L536 675Z" fill="#005800" />
						<path d="M207 640L545 675L530 792L198 760Z" fill="#005800" />
						<path d="M378 9H588L478 665L273 645Z" fill="#e8e800" />
						<path d="M515 9H528L445 425L433 540L438 480Z" fill="#ada800" />
						<path d="M548 9L460 570M560 9L480 600" stroke="#a8a400" stroke-width="3" fill="none" />
						<path d="M588 9L480 620" stroke="#888800" stroke-width="3" fill="none" />
						<path d="M273 603H303L307 555H335L345 415L445 425L433 567L460 570L455 615L480 620L475 667L273 645Z" fill="#b3b000" />
					</g>

					<!-- grey wall behind the panel -->
					<circle cx="180" cy="328" r="11" fill="none" stroke="#0a7a0a" />
					<path d="M167 168H340V268L167 257Z" fill="url(#wallTop)" />
					<path d="M167 257L340 268V333L167 323Z" fill="#888" />
					<path d="M167 323L272 333" stroke="#0a8a0a" />
					<text x="180" y="329" class="tiny" fill="#ddd">A1</text>

					<!-- axis triad -->
					<path d="M222 423L225 382" stroke="#0a7cff" stroke-width="4" />
					<path d="M225 377L221 392H229Z" fill="#0a7cff" />
					<path d="M222 422L262 427" stroke="#f00" stroke-width="4" />
					<path d="M271 428L258 422V432Z" fill="#f00" />
					<path d="M213 371H222L213 380H222" fill="none" stroke="#0a7cff" />
					<path d="M233 409L238 414L243 408M238 414V418" fill="none" stroke="#0f0" />
					<path d="M260 419L268 426M268 419L260 426" stroke="#f00" />
					<defs>
						<linearGradient id="wallTop" x1="0" y1="0" x2="0" y2="1">
							<stop offset="0" stop-color="#c4c4c4" />
							<stop offset="1" stop-color="#a8a8a8" />
						</linearGradient>
					</defs>
				</svg>

				<div class="panel">
					<div class="ptitle">钢筋显示控制面板</div>
					<div class="pbody">
						{#each ['底部受力筋', '底部分布筋', '显示其它图元', '显示详细公式'] as c}
							<label class="pl"><i class="tick"><svg width="9" height="9" viewBox="0 0 9 9"><path d="M1 4.5l2.5 2.5L8 2" fill="none" stroke="#555" stroke-width="1.2" /></svg></i>{c}</label>
						{/each}
					</div>
				</div>
			</div>

			<div class="bar snap">{@render toolRow(snapRow, 167)}</div>

			<div class="lower">
				<div class="dots"><svg width="8" height="8" viewBox="0 0 8 8"><path d="M1 1l6 6M7 1L1 7" stroke="#b66" stroke-width="1.2" /></svg></div>
				<div class="editor">
					<div class="bar ed nudge">{@render toolRow(editRow, 180)}</div>
					<div class="tablewrap">
						<table>
							<colgroup>{#each cols as c}<col style="width:{c}px" />{/each}</colgroup>
							<thead>
								<tr>
									{#each heads as h, i}
										{@const parts = h.split('|')}
										<th class:hot={i === 1} class:lead={i === 1}>{parts[0]}{#if parts[1]}<span class="unit">{parts[1]}</span>{/if}</th>
									{/each}
								</tr>
							</thead>
							<tbody>
								{#each rows as r, ri}
									<tr>
										<th class="rh" class:cur={ri === 0}>{r.h}</th>
										<td class="name lead" class:act={ri === 0}>{r.name}<br />{r.sub}</td>
										<td class="m">{r.d}</td>
										<td class="c">Φ</td>
										<td class="m">1</td>
										<td class="shape"><span class="num">{r.n}</span><i></i></td>
										<td class="m">{r.f}</td>
										<td>{r.desc}</td>
										<td class="m">(0)</td>
										<td class="m">{r.len}</td>
										<td class="m">{r.cnt}</td>
										<td class="m">0</td>
										<td class="m">0</td>
										<td class="m">{r.u}</td>
										<td class="m">{r.t}</td>
										<td>直筋</td>
									</tr>
								{/each}
								<tr class="blank">
									<th class="rh">4</th>
									<td class="lead"></td>
									{#each cols.slice(2) as _}<td></td>{/each}
								</tr>
							</tbody>
						</table>
					</div>
					<div class="tscroll">
						<svg width="18" height="16" viewBox="0 0 18 16"><path d="M11 4L7 8l4 4" fill="none" stroke="#555" stroke-width="1.5" /></svg>
						<div class="tthumb"></div>
						<svg class="end" width="18" height="16" viewBox="0 0 18 16"><path d="M7 4l4 4-4 4" fill="none" stroke="#555" stroke-width="1.5" /></svg>
					</div>
				</div>
			</div>
		</section>
	</div>

	<footer class="status">
		<span class="s1">X=229098 Y=7653</span>
		<span class="s2"><em>层高</em>:2.15m</span>
		<span class="s3"><em>底标高</em>:-2.2m</span>
		<span class="s4">1(1)</span>
		<span class="s5"></span>
		<span class="s6">116 FPS</span>
	</footer>

	<div class="taskbar">
		<div class="start">
			<svg width="16" height="16" viewBox="0 0 16 16"><path d="M0 2.5l6.5-1v6H0zM7.5 1.3L16 0v7.5H7.5zM0 8.5h6.5v6l-6.5-1zM7.5 8.5H16V16l-8.5-1.3z" fill="#fff" /></svg>
		</div>
		<div class="search">
			<i class="cortana"></i>
			<span>在这里输入你要搜索的内容</span>
			<svg width="12" height="18" viewBox="0 0 12 18"><rect x="3.5" y="1" width="5" height="10" rx="2.5" fill="none" stroke="#888" /><path d="M1 8c0 6 10 6 10 0M6 13v4M3 17h6" fill="none" stroke="#888" /></svg>
		</div>
		<div class="slot tv">{@render icon('taskview', 22)}</div>
		{#each taskApps as a}
			<div class="slot" class:cur={a[2]} style="width:{a[1]}px">{@render icon(a[0], 24)}</div>
		{/each}
		<div class="trayarea">
			<span class="link">链接</span>
			{#each tray as t, i}
				<span class="trayic" style="margin-left:{i ? t[1] - tray[i - 1][1] - tray[i - 1][2] : 13}px">{@render icon(t[0], t[2])}</span>
			{/each}
			<span class="ime">中</span>
			<span class="trayic sg">{@render icon('sogou', 16)}</span>
			<div class="clock"><span>16:03</span><span>2018/6/14</span></div>
			<div class="msg">{@render icon('msg', 16)}<b>1</b></div>
		</div>
		{#each lit as l}
			<i class="lit" style="left:{l[0]}px;width:{l[1]}px"></i>
		{/each}
	</div>

	<!-- floating desktop widgets, sitting over the window -->
	<div class="ball"><b>65</b></div>
	<div class="sogou">
		<svg class="slogo" width="28" height="28" viewBox="0 0 16 16">{@html I.sogou}</svg>
		<b class="zh">中</b>
		<span class="dots2">°,</span>
		<svg width="16" height="16" viewBox="0 0 16 16"><circle cx="8" cy="8" r="7" fill="none" stroke="#2078c8" stroke-width="1.5" /><circle cx="5.5" cy="6.5" r="1" fill="#2078c8" /><circle cx="10.5" cy="6.5" r="1" fill="#2078c8" /><path d="M4.5 10c1.5 2 5.5 2 7 0" fill="none" stroke="#2078c8" stroke-width="1.2" /></svg>
		<svg width="14" height="16" viewBox="0 0 14 16"><rect x="4" y="0" width="6" height="10" rx="3" fill="#2078c8" /><path d="M1 7c0 6 12 6 12 0M7 12v4" fill="none" stroke="#2078c8" stroke-width="1.4" /></svg>
		<svg width="16" height="14" viewBox="0 0 16 14"><rect x="0" y="1" width="16" height="12" rx="2" fill="#2078c8" /><path d="M2 4h12M2 7h12M4 10h8" stroke="#fff" stroke-dasharray="1.5 1" /></svg>
		<svg width="17" height="16" viewBox="0 0 17 16"><circle cx="7" cy="4" r="3.5" fill="#b8c4d0" /><path d="M1 15c0-8 12-8 12 0z" fill="#b8c4d0" /><rect x="9" y="9" width="8" height="6" fill="#9aa8b6" /></svg>
		<svg width="15" height="15" viewBox="0 0 15 15"><path d="M4 0L0 3l2 3 2-1v10h7V5l2 1 2-3-4-3-2.5 2h-2z" fill="#2078c8" /></svg>
		<svg width="14" height="16" viewBox="0 0 14 16"><path d="M9 0a4 4 0 0 0-4 5L0 12c-1 2 1 4 3 3l6-6a4 4 0 0 0 5-5l-3 2-2-1V2l2-2z" fill="#2078c8" /></svg>
	</div>
	<div class="netw">
		<div class="wbadge">
			<svg width="26" height="22" viewBox="0 0 26 22"><path d="M2 8c7-7 15-7 22 0M6.5 12.5c4-4 9-4 13 0M10.5 16.5c1.5-1.500 3.5-1.500 5 0" fill="none" stroke="#fff" stroke-width="2.4" /><circle cx="13" cy="20" r="1.8" fill="#fff" /></svg>
		</div>
		<div class="stats">
			<div><svg width="11" height="13" viewBox="0 0 11 13"><path d="M3 1v11M1 9l2 3 2-3" fill="none" stroke="#18b868" stroke-width="1.5" /><path d="M8 12V1M6 4l2-3 2 3" fill="none" stroke="#f08020" stroke-width="1.5" /></svg><span>0.00K/s</span></div>
			<div><svg width="9" height="13" viewBox="0 0 9 13"><rect x="0" y="2" width="9" height="11" rx="1" fill="#18c878" /><rect x="2" y="0" width="5" height="2" fill="#18c878" /><rect x="1.5" y="4" width="6" height="4" fill="#fff" /></svg><span>0</span></div>
		</div>
	</div>
</div>

<style>
	:global(body) {
		margin: 0;
		overflow: hidden;
		background: #f0f0f0;
	}

	.app {
		position: relative;
		width: 1366px;
		height: 768px;
		overflow: hidden;
		background: #efefef;
		font: 12px/16px 'Noto Sans', 'Noto Sans CJK SC', sans-serif;
		color: #111;
		display: flex;
		flex-direction: column;
	}

	.ico {
		flex: none;
		display: block;
	}

	.title {
		height: 24px;
		flex: none;
		display: flex;
		align-items: center;
		background: #fff;
		padding-left: 3px;
		white-space: nowrap;
		font-size: 12px;
		letter-spacing: 0.3px;
		color: #222;
	}

	.logo {
		margin-right: 5px;
	}

	.winbtns {
		position: absolute;
		top: 0;
		right: 2px;
		display: flex;
		height: 20px;
	}

	.bar {
		display: flex;
		flex: none;
	}

	.nudge .it {
		margin-top: 2px;
	}

	.menu {
		height: 26px;
		background: #fcfcfc;
	}

	.r1 {
		height: 26px;
		margin: 4px 0;
	}

	.r2 {
		height: 26px;
	}

	.r3 {
		height: 25px;
		margin-top: 1px;
	}

	.r4 {
		height: 27px;
		margin: 4px 0 1px;
	}

	.grp {
		flex: none;
		box-sizing: border-box;
		display: flex;
		align-items: center;
		background: #f7f7f7;
		border-radius: 3px;
		height: 100%;
	}

	.menu .grp {
		background: none;
	}

	.grp.stub {
		background: linear-gradient(90deg, #f6f6f6, #fff);
	}

	.cell {
		flex: none;
		height: 100%;
		display: flex;
		align-items: center;
	}

	.it {
		display: flex;
		align-items: center;
		gap: 3px;
		white-space: nowrap;
		box-sizing: border-box;
	}

	.it.off {
		color: #9c9c9c;
	}

	.it.dim {
		color: #6f6f6f;
		font-family: 'Liberation Sans', 'Noto Sans CJK SC', sans-serif;
		font-size: 13px;
	}

	.it.teal {
		color: #1a6e7c;
	}

	.it.white {
		background: #fff;
		height: 26px;
		padding-right: 5px;
		margin-right: -5px;
	}

	.it.on {
		height: 25px;
		padding-left: 3px;
		background: #e6f0fa;
		border: 1px solid #1e88e0;
	}

	.sep {
		display: block;
		width: 1px;
		height: 20px;
		margin-left: 3px;
		background: #c8c8c8;
	}

	.grip {
		display: block;
		width: 2px;
		height: 16px;
		margin-left: 2px;
		background: repeating-linear-gradient(180deg, #999 0 2px, transparent 2px 4px);
	}

	.arrow {
		display: block;
		flex: none;
		width: 0;
		height: 0;
		margin-left: 3px;
		border: 3px solid transparent;
		border-top: 4px solid #222;
		border-bottom: 0;
	}

	.more {
		font: 700 12px/14px 'Liberation Sans', sans-serif;
		margin-top: -8px;
	}

	.combo {
		display: flex;
		align-items: center;
		justify-content: space-between;
		box-sizing: border-box;
		height: 24px;
		padding: 0 3px 0 2px;
		background: #fff;
		white-space: nowrap;
	}

	.spin {
		display: flex;
		align-items: center;
		justify-content: flex-end;
		box-sizing: border-box;
		height: 22px;
		padding-right: 2px;
		border: 1px solid #8a8a8a;
		background: #f4f4f4;
		color: #666;
		font: 12px 'Liberation Sans', sans-serif;
	}

	.updown {
		display: flex;
		flex-direction: column;
		gap: 4px;
		margin-left: 6px;
		padding: 0 2px;
	}

	.updown i {
		display: block;
		width: 0;
		height: 0;
		border: 3px solid transparent;
		border-bottom: 3px solid #444;
		border-top: 0;
	}

	.updown i + i {
		border-bottom: 0;
		border-top: 3px solid #444;
	}

	.box {
		display: block;
		width: 10px;
		height: 10px;
		border: 1px solid #777;
		background: #fff;
	}

	.main {
		flex: none;
		height: 622px;
		display: flex;
		align-items: flex-start;
	}

	.nav {
		flex: none;
		width: 166px;
		display: flex;
		flex-direction: column;
		margin-right: 1px;
	}

	.navhead {
		height: 15px;
		margin-bottom: 1px;
		display: flex;
		align-items: center;
		background: #0055e0;
		color: #fff;
		font-size: 12px;
		padding-left: 1px;
	}

	.navhead span {
		flex: 1;
	}

	.navbtn {
		height: 22px;
		margin: 0 0 0 2px;
		width: 164px;
		padding: 0;
		font: 12px/20px 'Noto Sans CJK SC', sans-serif;
		color: #111;
		background: #f0f0f0;
		border: 1px solid #a8a8a8;
	}

	.navbtn.gap {
		margin-top: 1px;
	}

	.frame {
		box-sizing: border-box;
		height: 515px;
		width: 164px;
		margin-left: 2px;
		border: 2px solid #a0a0a0;
		border-left-width: 1px;
		border-right-width: 1px;
		display: flex;
		flex-direction: column;
		background: #f0f0f0;
	}

	.expand {
		flex: none;
		height: 23px;
		display: flex;
		align-items: center;
		gap: 5px;
		padding-left: 4px;
		background: #f5f5f5;
		border-bottom: 1px solid #d8d8d8;
	}

	.treewrap {
		flex: none;
		height: 472px;
		display: flex;
		background: #fff;
	}

	.list {
		flex: 1;
		overflow: hidden;
		padding-top: 3px;
		font-family: 'Noto Sans CJK SC', sans-serif;
		white-space: nowrap;
	}

	.node,
	.kid {
		display: flex;
		align-items: center;
		height: 16px;
	}

	.node .chev {
		flex: none;
		margin: 0 6px 0 9px;
	}

	.nm {
		margin-left: 3px;
	}

	.stem {
		flex: none;
		align-self: stretch;
		width: 18px;
		margin-left: 12px;
		border-left: 1px dotted #777;
	}

	.conn {
		flex: none;
		align-self: flex-start;
		width: 12px;
		height: 16px;
		border-left: 1px dotted #777;
	}

	.conn.last {
		height: 8px;
	}

	.conn::after {
		content: '';
		display: block;
		height: 7px;
		border-bottom: 1px dotted #777;
	}

	.ent {
		display: flex;
		align-items: center;
		height: 16px;
		margin-left: -3px;
		padding: 0 2px 0 3px;
	}

	.ent.sel {
		background: #d4d4d4;
	}

	.lbl {
		margin-left: 4px;
		line-height: 16px;
	}

	.key {
		font: 10px/16px 'Liberation Mono', monospace;
	}

	.vscroll {
		flex: none;
		width: 16px;
		background: #f0f0f0;
		display: flex;
		flex-direction: column;
	}

	.vtrack {
		flex: 1;
	}

	.vthumb {
		height: 236px;
		margin-top: 110px;
		background: #cdcdcd;
	}

	.hscroll {
		flex: none;
		height: 15px;
		display: flex;
		align-items: center;
		background: #f0f0f0;
	}

	.hthumb {
		width: 102px;
		height: 15px;
		background: #cdcdcd;
	}

	.hscroll .end {
		margin-left: 1px;
	}

	.work {
		flex: none;
		width: 1199px;
		display: flex;
		flex-direction: column;
	}

	.view {
		position: relative;
		height: 305px;
		flex: none;
		background: #000;
	}

	.scene {
		display: block;
	}

	.axis {
		font: 700 12px 'Liberation Sans', sans-serif;
		text-anchor: middle;
	}

	.tiny {
		font: 700 7px 'Liberation Sans', sans-serif;
		text-anchor: middle;
	}

	.panel {
		position: absolute;
		left: 103px;
		top: 2px;
		box-sizing: border-box;
		width: 167px;
		height: 178px;
		border: 1px solid #888;
		background: #fff;
		padding: 0 1px 1px;
		display: flex;
		flex-direction: column;
	}

	.ptitle {
		height: 30px;
		line-height: 28px;
		padding-left: 7px;
		color: #a0a0a0;
		font-family: 'Noto Sans CJK SC', sans-serif;
	}

	.pbody {
		flex: 1;
		border: 1px solid #8a8a8a;
		padding: 2px 0 0 3px;
		font-family: 'Noto Sans CJK SC', sans-serif;
		color: #000;
	}

	.pl {
		display: flex;
		align-items: center;
		gap: 3px;
		height: 12px;
		line-height: 12px;
		white-space: nowrap;
	}

	.tick {
		display: flex;
		align-items: center;
		justify-content: center;
		box-sizing: border-box;
		width: 11px;
		height: 11px;
		border: 1px solid #999;
		background: #fff;
	}

	.snap {
		height: 25px;
		padding: 2px 0 5px;
	}

	.snap .grp {
		background: #f7f7f7;
	}

	.lower {
		flex: none;
		height: 200px;
		display: flex;
	}

	.dots {
		flex: none;
		width: 13px;
		box-sizing: border-box;
		padding: 3px 0 0 7px;
		background: radial-gradient(circle, #b4b4b4 0.7px, transparent 1px) 2px 0 / 4px 4px repeat-y;
	}

	.editor {
		flex: none;
		width: 1186px;
		display: flex;
		flex-direction: column;
	}

	.ed {
		height: 24px;
		margin: 2px 0 3px;
	}

	.tablewrap {
		flex: 1;
		background: #fff;
		border-right: 2px solid #c4c4c4;
	}

	table {
		table-layout: fixed;
		width: 1184px;
		border-collapse: separate;
		border-spacing: 0;
		font-family: 'Noto Sans CJK SC', sans-serif;
	}

	th,
	td {
		box-sizing: border-box;
		padding: 0;
		border-right: 1px solid #c0c0c0;
		border-bottom: 1px solid #b8b8b8;
		overflow: hidden;
		white-space: nowrap;
		font-weight: 400;
	}

	thead th {
		height: 19px;
		border-top: 1px solid #c0c0c0;
		background: linear-gradient(#fff, #ededed);
		text-align: center;
		line-height: 15px;
	}

	.unit {
		font: 10px/10px 'Liberation Mono', monospace;
	}

	th.hot {
		background: linear-gradient(#fce0a8, #f6c67a);
		color: #8a1a00;
	}

	.rh {
		height: 29px;
		text-align: center;
		background: linear-gradient(#fff, #ededed);
		font: 11px 'Liberation Mono', monospace;
	}

	.rh.cur {
		background: #ffd78f;
		color: #601080;
	}

	tbody td {
		background: #caffd6;
		padding-left: 1px;
		line-height: 13px;
	}

	.name {
		white-space: normal;
	}

	.name.act {
		background: #aae8d6;
	}

	tbody td.lead,
	th.lead {
		border-right: 1px solid #000;
	}

	tbody td.m {
		padding-left: 2px;
		font: 10.5px/13px 'Liberation Mono', monospace;
	}

	.c {
		text-align: center;
		font-weight: 700;
		font-size: 11px;
	}

	.shape {
		text-align: center;
		padding-top: 3px;
	}

	.num {
		display: block;
		color: #e00;
		font: 11px/13px 'Liberation Mono', monospace;
	}

	.shape i {
		display: block;
		width: 150px;
		height: 2px;
		margin: 2px auto 0;
		background: #000;
	}

	.blank .rh {
		height: 19px;
	}

	tbody .blank td {
		background: #fff;
	}

	.tscroll {
		flex: none;
		height: 16px;
		display: flex;
		margin-bottom: 1px;
		background: #f0f0f0;
		border-bottom: 1px solid #c4c4c4;
		margin-right: 2px;
	}

	.tthumb {
		width: 762px;
		background: #cdcdcd;
	}

	.tscroll .end {
		margin-left: auto;
	}

	.status {
		flex: none;
		height: 21px;
		margin-top: 1px;
		display: flex;
		gap: 2px;
		font: 10px/19px 'Liberation Mono', 'Noto Sans CJK SC', monospace;
		background: #f2f2f2;
	}

	.status span {
		box-sizing: border-box;
		height: 21px;
		padding-left: 1px;
		border: 1px solid #dcdcdc;
		background: #fafafa;
		white-space: nowrap;
	}

	.status em {
		font: normal 12px/19px 'Noto Sans CJK SC', sans-serif;
	}

	.s1 {
		width: 148px;
	}

	.s2 {
		width: 78px;
	}

	.s3 {
		width: 98px;
	}

	.s4 {
		width: 48px;
	}

	.s5 {
		width: 913px;
	}

	.s6 {
		width: 70px;
	}

	.taskbar {
		position: relative;
		flex: none;
		height: 40px;
		display: flex;
		align-items: center;
		background: #020c14;
		color: #ddd;
	}

	.start {
		flex: none;
		width: 48px;
		height: 40px;
		display: flex;
		align-items: center;
		justify-content: center;
		background: #000;
	}

	.search {
		flex: none;
		box-sizing: border-box;
		width: 344px;
		height: 40px;
		display: flex;
		align-items: center;
		padding: 0 15px 0 9px;
		background: #2d2d2d;
		color: #8c8c8c;
		font-size: 13px;
	}

	.search span {
		flex: 1;
		margin-left: 6px;
	}

	.cortana {
		display: block;
		box-sizing: border-box;
		width: 20px;
		height: 20px;
		border: 3px solid #e4e4e4;
		border-radius: 50%;
	}

	.slot {
		flex: none;
		height: 40px;
		display: flex;
		align-items: center;
		justify-content: center;
	}

	.slot.tv {
		width: 49px;
	}

	.slot.cur {
		background: #2a3a44;
	}

	.lit {
		position: absolute;
		bottom: 0;
		height: 2px;
		background: #76b9ed;
	}

	.trayarea {
		flex: 1;
		height: 40px;
		display: flex;
		align-items: center;
		padding-left: 13px;
	}

	.link {
		font-size: 12px;
		color: #ccc;
	}

	.trayic {
		display: flex;
	}

	.ime {
		margin-left: 10px;
		font-size: 13px;
		color: #eee;
	}

	.sg {
		margin-left: 14px;
	}

	.clock {
		display: flex;
		flex-direction: column;
		align-items: center;
		width: 64px;
		margin-left: 15px;
		color: #e8e8e8;
		font: 12px/18px 'Noto Sans', sans-serif;
	}

	.msg {
		position: relative;
		margin-left: 20px;
		padding-top: 2px;
	}

	.msg b {
		position: absolute;
		left: 7px;
		top: 10px;
		width: 16px;
		height: 16px;
		border-radius: 50%;
		background: #333;
		color: #eee;
		border: 1px solid #777;
		box-sizing: border-box;
		text-align: center;
		font: 700 11px/14px 'Liberation Sans', sans-serif;
	}

	.ball {
		position: absolute;
		left: 1009px;
		top: -26px;
		width: 44px;
		height: 44px;
		border-radius: 50%;
		background: #42b94e;
		border: 1px solid #9a9a9a;
		box-shadow: 0 0 0 1px #dfe;
		display: flex;
		align-items: flex-end;
		justify-content: center;
		color: #fff;
		font: 700 12px/20px 'Liberation Sans', sans-serif;
	}

	.sogou {
		position: absolute;
		left: 784px;
		top: 16px;
		box-sizing: border-box;
		width: 192px;
		height: 24px;
		display: flex;
		align-items: center;
		gap: 7px;
		padding-left: 19px;
		background: #fbfdff;
		border: 1px solid #a4c8e8;
		color: #2078c8;
	}

	.slogo {
		position: absolute;
		left: -16px;
		top: 1px;
	}

	.zh {
		font: 700 15px/16px 'Noto Sans CJK SC', sans-serif;
		margin-right: 2px;
	}

	.dots2 {
		font: 700 13px/14px 'Liberation Sans', sans-serif;
		width: 13px;
	}

	.netw {
		position: absolute;
		left: 1044px;
		top: 23px;
		width: 121px;
		height: 50px;
		box-sizing: border-box;
		border-radius: 25px;
		background: #fff;
		box-shadow: 0 1px 5px rgba(0, 0, 0, 0.35);
		display: flex;
		align-items: center;
		padding-left: 8px;
	}

	.wbadge {
		flex: none;
		width: 37px;
		height: 37px;
		border-radius: 50%;
		background: #18c070;
		display: flex;
		align-items: center;
		justify-content: center;
	}

	.stats {
		margin-left: 6px;
		font: 11px/19px 'Liberation Sans', sans-serif;
		color: #778;
	}

	.stats div {
		display: flex;
		align-items: center;
		gap: 4px;
	}
</style>
